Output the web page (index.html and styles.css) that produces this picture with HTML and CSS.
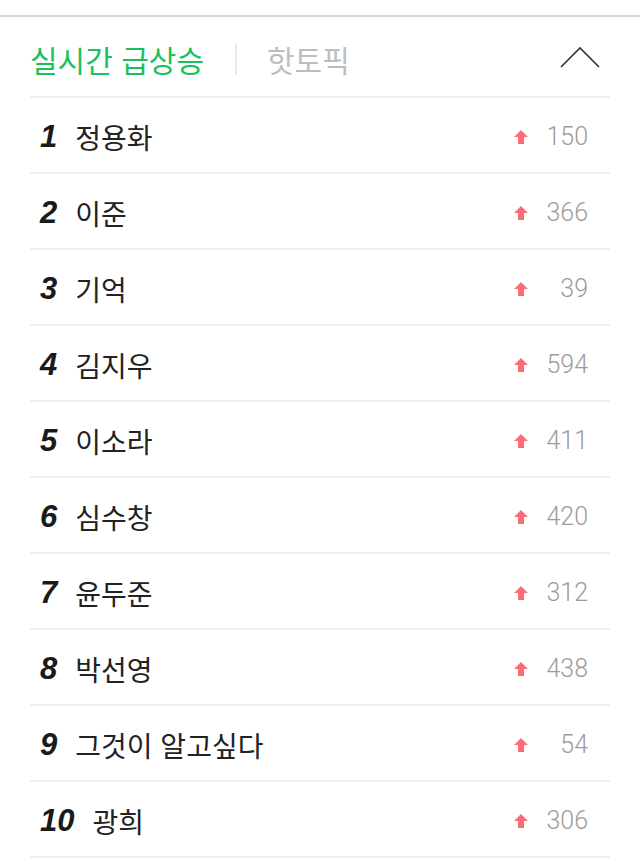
FILE: index.html
```html
<!DOCTYPE html>
<html lang="ko">
<head>
    <meta charset="UTF-8">
    <meta name="viewport" content="width=device-width, initial-scale=1.0">
    <title>실시간 급상승</title>
    <link rel="stylesheet" href="styles.css">
</head>
<body>

    <!-- Realtime ranking panel -->
    <div class="panel">
        <div class="tabs">
            <span class="tab active">실시간 급상승</span>
            <span class="divider"></span>
            <span class="tab">핫토픽</span>
            <svg class="chevron" width="40" height="22" viewBox="0 0 40 22">
                <path d="M1 21 L20 2 L39 21" fill="none" stroke="#333" stroke-width="1.6"/>
            </svg>
        </div>

        <ol class="rank-list">
            <li class="row"><span class="rank">1</span><span class="name">정용화</span><svg class="up" width="14" height="14" viewBox="0 0 14 14"><path d="M7 0 L14 7 L10 7 L10 14 L4 14 L4 7 L0 7 Z" fill="#fb6c79"/></svg><span class="count">150</span></li>
            <li class="row"><span class="rank">2</span><span class="name">이준</span><svg class="up" width="14" height="14" viewBox="0 0 14 14"><path d="M7 0 L14 7 L10 7 L10 14 L4 14 L4 7 L0 7 Z" fill="#fb6c79"/></svg><span class="count">366</span></li>
            <li class="row"><span class="rank">3</span><span class="name">기억</span><svg class="up" width="14" height="14" viewBox="0 0 14 14"><path d="M7 0 L14 7 L10 7 L10 14 L4 14 L4 7 L0 7 Z" fill="#fb6c79"/></svg><span class="count">39</span></li>
            <li class="row"><span class="rank">4</span><span class="name">김지우</span><svg class="up" width="14" height="14" viewBox="0 0 14 14"><path d="M7 0 L14 7 L10 7 L10 14 L4 14 L4 7 L0 7 Z" fill="#fb6c79"/></svg><span class="count">594</span></li>
            <li class="row"><span class="rank">5</span><span class="name">이소라</span><svg class="up" width="14" height="14" viewBox="0 0 14 14"><path d="M7 0 L14 7 L10 7 L10 14 L4 14 L4 7 L0 7 Z" fill="#fb6c79"/></svg><span class="count">411</span></li>
            <li class="row"><span class="rank">6</span><span class="name">심수창</span><svg class="up" width="14" height="14" viewBox="0 0 14 14"><path d="M7 0 L14 7 L10 7 L10 14 L4 14 L4 7 L0 7 Z" fill="#fb6c79"/></svg><span class="count">420</span></li>
            <li class="row"><span class="rank">7</span><span class="name">윤두준</span><svg class="up" width="14" height="14" viewBox="0 0 14 14"><path d="M7 0 L14 7 L10 7 L10 14 L4 14 L4 7 L0 7 Z" fill="#fb6c79"/></svg><span class="count">312</span></li>
            <li class="row"><span class="rank">8</span><span class="name">박선영</span><svg class="up" width="14" height="14" viewBox="0 0 14 14"><path d="M7 0 L14 7 L10 7 L10 14 L4 14 L4 7 L0 7 Z" fill="#fb6c79"/></svg><span class="count">438</span></li>
            <li class="row"><span class="rank">9</span><span class="name">그것이 알고싶다</span><svg class="up" width="14" height="14" viewBox="0 0 14 14"><path d="M7 0 L14 7 L10 7 L10 14 L4 14 L4 7 L0 7 Z" fill="#fb6c79"/></svg><span class="count">54</span></li>
            <li class="row"><span class="rank">10</span><span class="name">광희</span><svg class="up" width="14" height="14" viewBox="0 0 14 14"><path d="M7 0 L14 7 L10 7 L10 14 L4 14 L4 7 L0 7 Z" fill="#fb6c79"/></svg><span class="count">306</span></li>
        </ol>
    </div>

</body>
</html>
```

FILE: styles.css
```css
body {
    margin: 0;
    padding-top: 15px;
    background: #fff;
    font-family: "Noto Sans CJK KR", "Noto Sans", sans-serif;
    color: #222;
}

/* full width rule above the panel */
.panel {
    border-top: 2px solid #d6d6d6;
    padding: 0 30px;
}

.tabs {
    display: flex;
    align-items: center;
    height: 81px;
    padding-top: 5px;
    box-sizing: border-box;
    border-bottom: 2px solid #f0f0f0;
}

.tab {
    font-size: 30px;
    line-height: 1;
    color: #bdbdbd;
}

.tab.active {
    color: #1dbf5b;
}

.divider {
    width: 2px;
    height: 31px;
    background: #e8e8e8;
    margin: 0 30px 0 31px;
}

.chevron {
    margin-left: auto;
    margin-right: 10px;
    margin-top: -4px;
}

.rank-list {
    list-style: none;
    margin: 0;
    padding: 0;
}

.row {
    display: flex;
    align-items: center;
    height: 74px;
    padding: 3px 22px 0 10px;
    box-sizing: content-box;
    height: 71px;
    border-bottom: 2px solid #f0f0f0;
}

.rank {
    font-family: "Liberation Sans", Arial, sans-serif;
    font-weight: bold;
    font-style: italic;
    font-size: 31px;
    color: #1a1a1a;
    margin-right: 18px;
}

.name {
    font-size: 28px;
    color: #222;
    flex: 1;
}

.up {
    margin-right: 4px;
}

.count {
    font-family: Roboto, "Liberation Sans", sans-serif;
    font-weight: 300;
    font-size: 25px;
    color: #9c9c9c;
    width: 56px;
    text-align: right;
}
```
